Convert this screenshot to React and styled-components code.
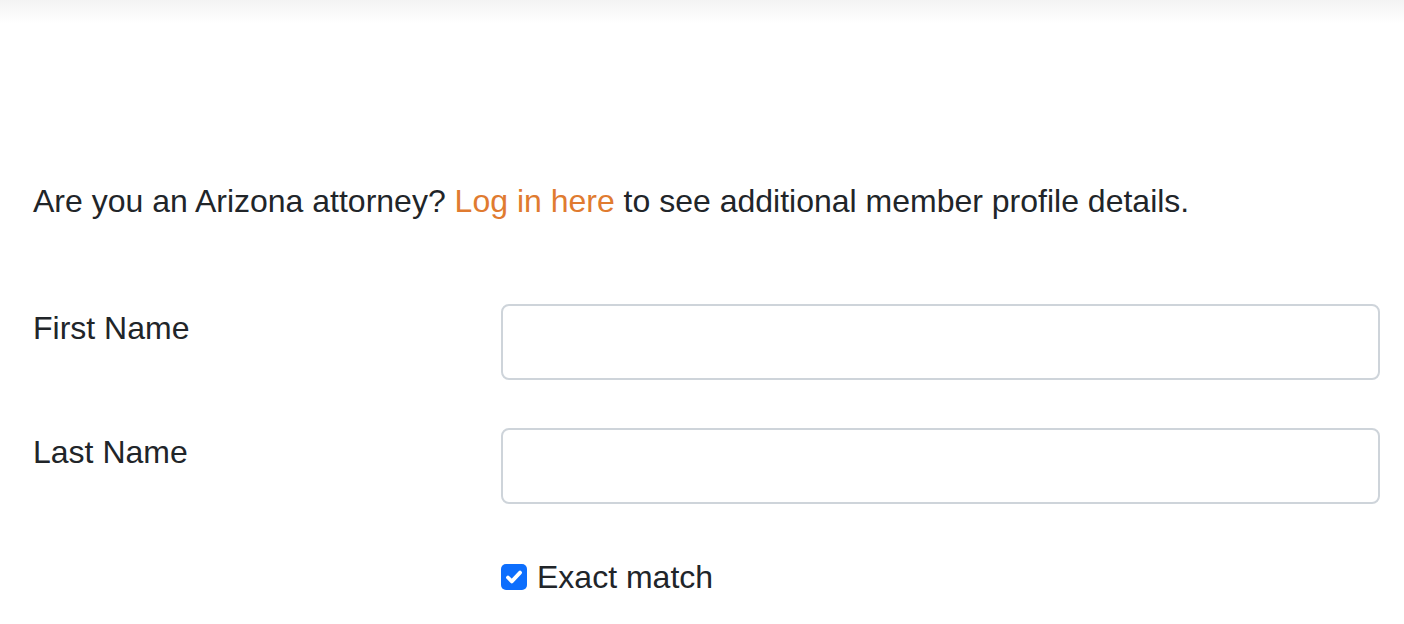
import React from 'react'
import styled, { createGlobalStyle } from 'styled-components'

const GlobalStyle = createGlobalStyle`
  * { box-sizing: border-box; }
  body {
    margin: 0;
    background: #fff;
    font-family: "Liberation Sans", Arial, sans-serif;
    color: #212529;
  }
`

const TopShade = styled.div`
  height: 24px;
  background: linear-gradient(to bottom, #f3f3f3, #ffffff);
`

const Page = styled.main`
  padding: 0 24px 0 33px;
  font-size: 32px;
  line-height: 48px;
`

const Intro = styled.p`
  margin: 153px 0 0;
`

const Link = styled.a`
  color: #e07b30;
  text-decoration: none;
`

const Form = styled.form`
  margin-top: 79px;
  display: grid;
  grid-template-columns: 468px 1fr;
  row-gap: 48px;
`

const Label = styled.label``

const Input = styled.input`
  height: 76px;
  width: 100%;
  border: 2px solid #ced4da;
  border-radius: 8px;
  font: inherit;
  padding: 0 24px;
  background: #fff;
`

const CheckRow = styled.label`
  grid-column: 2;
  margin-top: 1px;
  display: flex;
  align-items: center;
  gap: 10px;
`

const Box = styled.span`
  width: 26px;
  height: 26px;
  border-radius: 5px;
  background: #0d6efd;
  display: flex;
  align-items: center;
  justify-content: center;
`

export default function App() {
  return (
    <>
      <GlobalStyle />
      <TopShade />
      <Page>
        <Intro>
          Are you an Arizona attorney? <Link href="#">Log in here</Link> to see additional member profile details.
        </Intro>
        <Form>
          <Label htmlFor="first">First Name</Label>
          <Input id="first" type="text" />
          <Label htmlFor="last">Last Name</Label>
          <Input id="last" type="text" />
          <CheckRow>
            <Box>
              <svg width="22" height="22" viewBox="0 0 20 20" fill="none">
                <path d="M4.5 10.5l3.5 3.5 7.5-8" stroke="#fff" strokeWidth="3.4" strokeLinecap="round" strokeLinejoin="round" />
              </svg>
            </Box>
            Exact match
          </CheckRow>
        </Form>
      </Page>
    </>
  )
}
